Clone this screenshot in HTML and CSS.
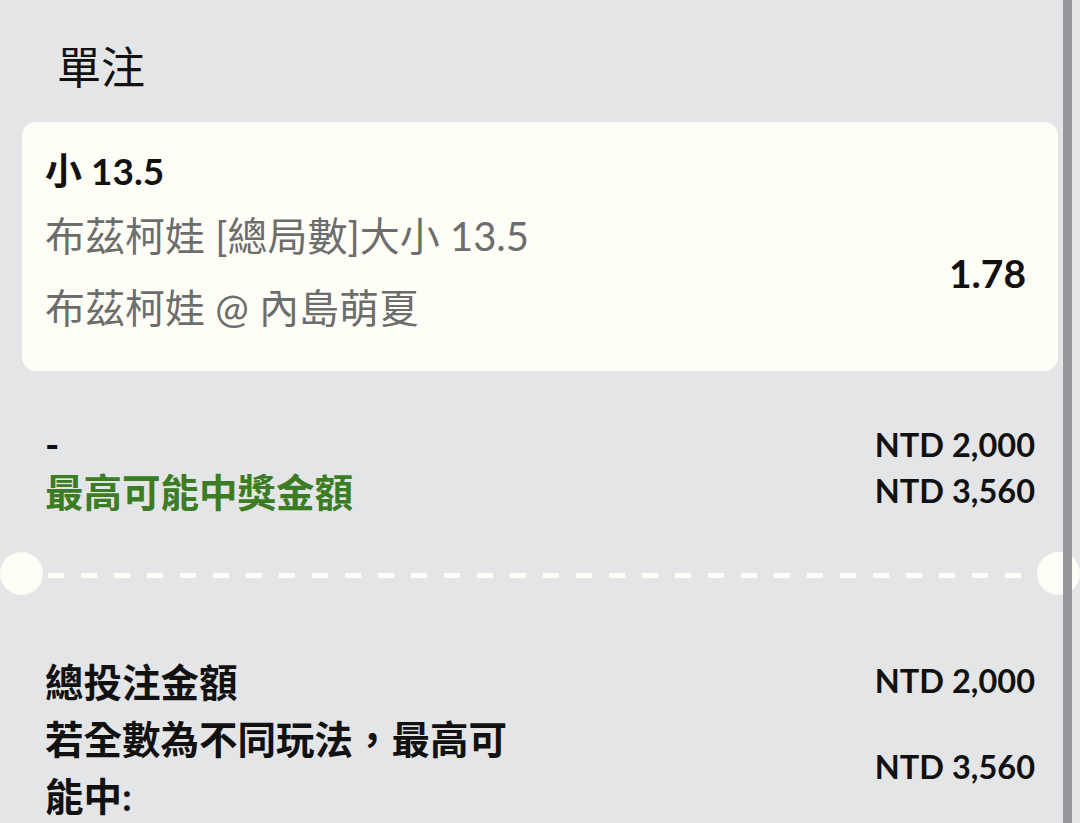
FILE: index.html
```html
<!DOCTYPE html>
<html lang="zh-Hant">
<head>
    <meta charset="UTF-8">
    <meta name="viewport" content="width=device-width, initial-scale=1.0">
    <title>單注</title>
    <link rel="stylesheet" href="styles.css">
</head>
<body>
    <div class="panel">
        <h1 class="title">單注</h1>

        <div class="card">
            <div class="card-info">
                <div class="pick">小 13.5</div>
                <div class="market">布茲柯娃 [總局數]大小 13.5</div>
                <div class="match">布茲柯娃 @ 內島萌夏</div>
            </div>
            <div class="odds">1.78</div>
        </div>

        <div class="summary">
            <div class="row">
                <span class="label">-</span>
                <span class="value">NTD 2,000</span>
            </div>
            <div class="row">
                <span class="label win">最高可能中獎金額</span>
                <span class="value">NTD 3,560</span>
            </div>
        </div>

        <div class="divider">
            <span class="dot"></span>
            <span class="dash"></span>
            <span class="dot"></span>
        </div>

        <div class="totals">
            <div class="row">
                <span class="label">總投注金額</span>
                <span class="value">NTD 2,000</span>
            </div>
            <div class="row">
                <span class="label">若全數為不同玩法，最高可能中:</span>
                <span class="value">NTD 3,560</span>
            </div>
        </div>

        <div class="scrollbar"></div>
    </div>
</body>
</html>
```

FILE: styles.css
```css
body{margin: 0;background-color: #e4e5e7;color: #111;font-family: Lato, "Noto Sans CJK TC", sans-serif;width: 1080px;height: 823px;overflow: hidden;}

        .panel{
            position: relative;
            height: 100%;
        }
        .title{
            margin: 0;
            padding: 39px 0 0 57px;
            height: 122px;
            box-sizing: border-box;
            font-size: 44px;
            font-weight: 400;
            line-height: 56px;
        }
        .card{
            margin: 0 22px;
            height: 249px;
            box-sizing: border-box;
            padding: 0 32px 0 23px;
            background-color: #fffef6;
            border-radius: 14px;
            display: flex;
            justify-content: space-between;
            align-items: center;
        }
        .card-info{
            align-self: flex-start;
            padding-top: 21px;
        }
        .pick{
            font-size: 37px;
            font-weight: 700;
            line-height: 56px;
        }
        .market, .match{
            font-size: 40px;
            color: #6d6d6d;
            line-height: 66px;
        }
        .market{
            margin-top: 4px;
        }
        .match{
            margin-top: 6px;
        }
        .odds{
            margin-top: 52px;
            font-size: 39px;
            font-weight: 700;
        }
        .summary{
            padding: 50px 45px 0 45px;
        }
        .row{
            display: flex;
            justify-content: space-between;
            align-items: center;
        }
        .label{
            font-size: 38.5px;
            font-weight: 700;
            max-width: 480px;
        }
        .value{
            font-size: 32.5px;
            font-weight: 700;
        }
        .summary .row{
            height: 46px;
        }
        .win{
            color: #3b7c25;
        }
        .divider{
            margin: 39px 0 59px 0;
            height: 43px;
            display: flex;
            align-items: center;
        }
        .dot{
            width: 43px;
            height: 43px;
            border-radius: 50%;
            background-color: #fffef6;
            flex: none;
        }
        .dash{
            flex: 1;
            height: 5px;
            margin: 4px 5px 0 5px;
            background-image: linear-gradient(to right, #fffef6 50%, transparent 50%);
            background-size: 33px 5px;
        }
        .totals{
            padding: 0 45px;
        }
        .totals .label{
            line-height: 57px;
        }
        .totals .value{
            margin-top: -4px;
        }
        .scrollbar{
            position: absolute;
            top: 0;
            bottom: 0;
            right: 8px;
            width: 9px;
            background-color: #97979b;
        }
```
